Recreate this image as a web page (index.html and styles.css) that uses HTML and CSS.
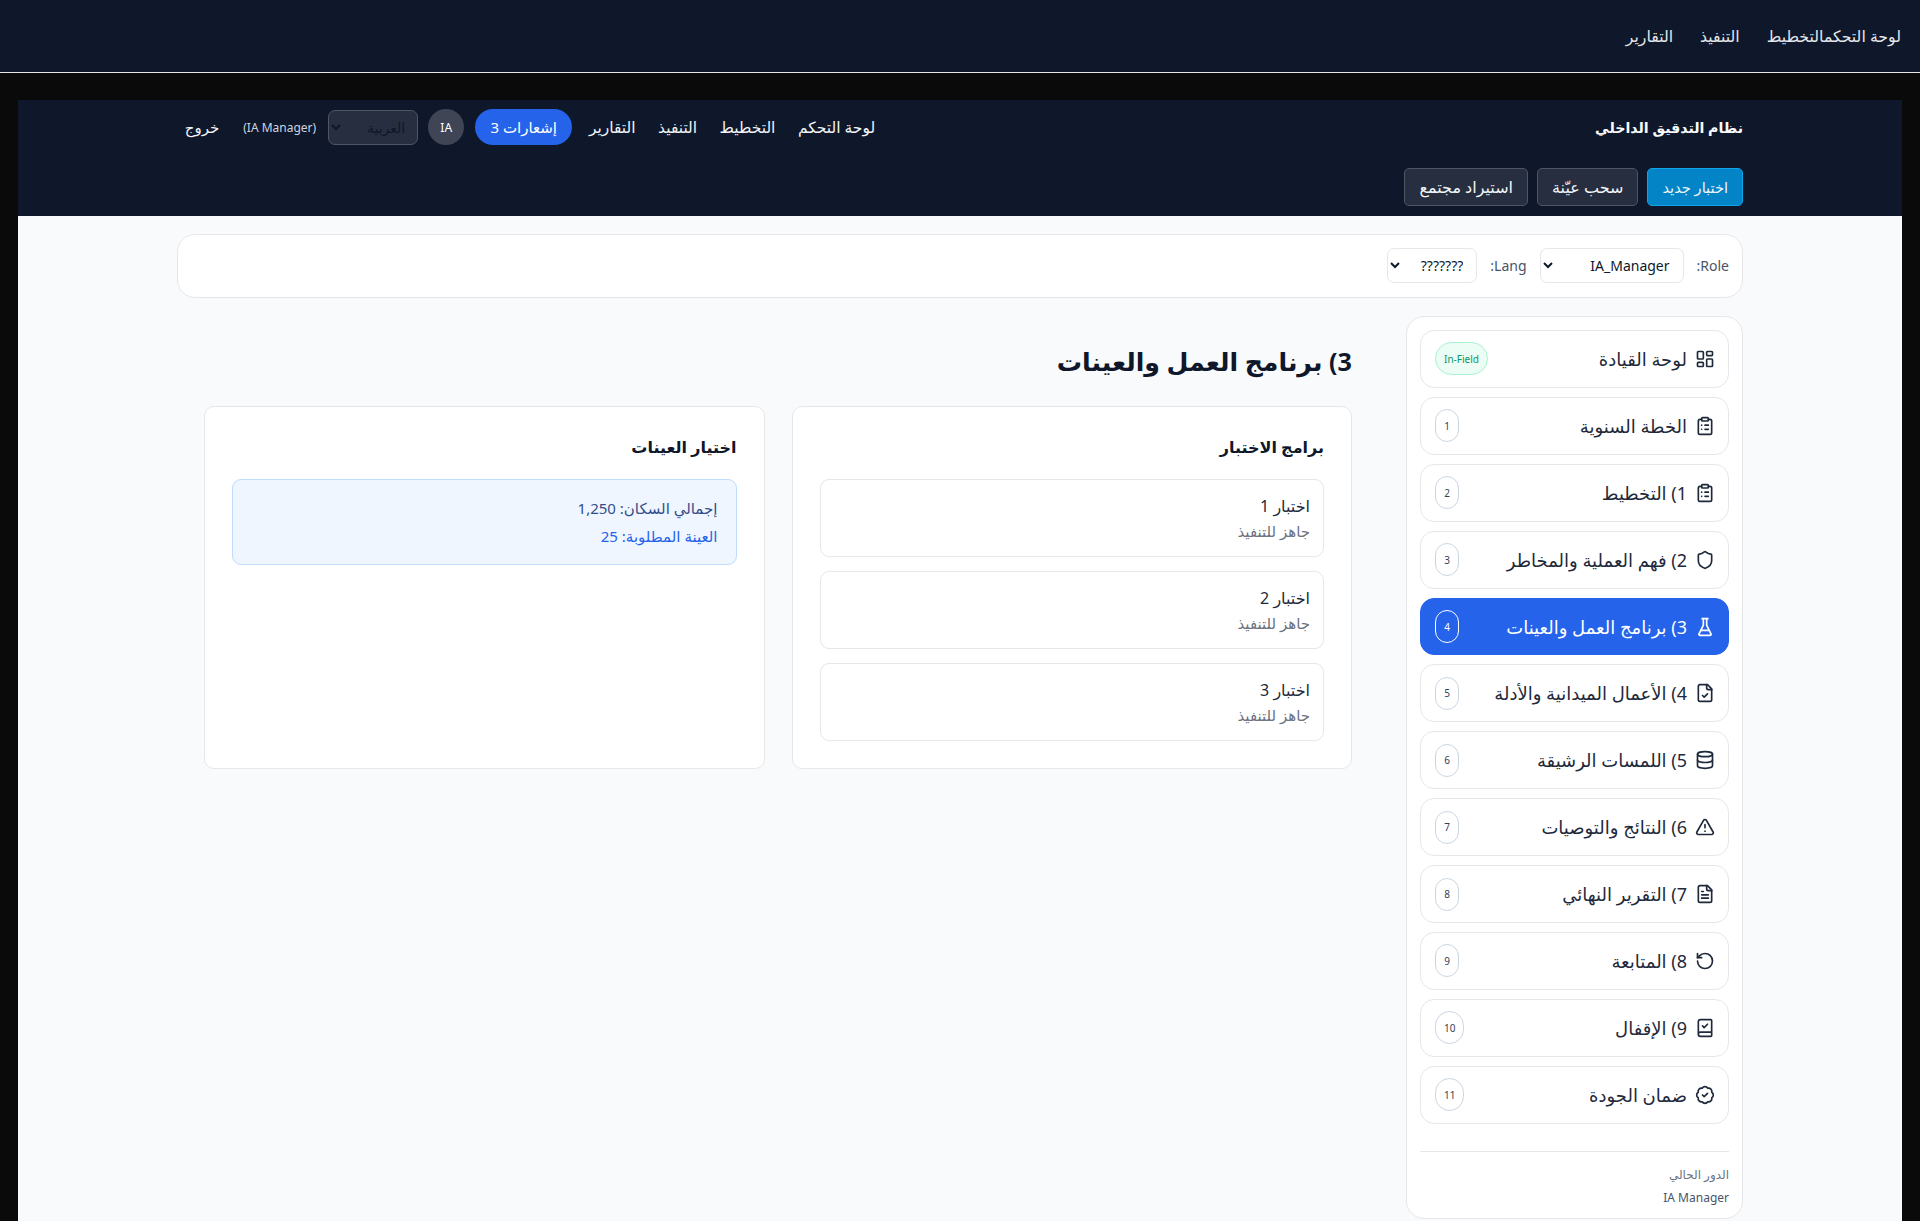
FILE: index.html
```html
<!DOCTYPE html>
<html lang="ar" dir="rtl">
<head>
    <meta charset="UTF-8">
    <meta name="viewport" content="width=device-width, initial-scale=1.0">
    <title>نظام التدقيق الداخلي</title>
    <link rel="stylesheet" href="styles.css">
</head>
<body>
    <nav class="topbar">
        <div class="topbar-group"><a href="#">لوحة التحكم</a><a href="#">التخطيط</a></div>
        <a href="#">التنفيذ</a>
        <a href="#">التقارير</a>
    </nav>

    <div class="shell">
        <header class="app-header">
            <div class="header-row">
                <div class="brand">نظام التدقيق الداخلي</div>
                <div class="header-nav">
                    <a class="nav-link" href="#">لوحة التحكم</a>
                    <a class="nav-link" href="#">التخطيط</a>
                    <a class="nav-link" href="#">التنفيذ</a>
                    <a class="nav-link" href="#">التقارير</a>
                    <button class="pill">إشعارات 3</button>
                    <span class="avatar">IA</span>
                    <select class="lang-select"><option>العربية</option></select>
                    <span class="user-role">(IA Manager)</span>
                    <a class="logout" href="#">خروج</a>
                </div>
            </div>
            <div class="header-actions">
                <button class="btn btn-primary">اختبار جديد</button>
                <button class="btn">سحب عيّنة</button>
                <button class="btn">استيراد مجتمع</button>
            </div>
        </header>

        <div class="content">
            <div class="filter-bar">
                <label>Role:</label>
                <select class="role-select"><option>IA_Manager</option></select>
                <label>Lang:</label>
                <select class="small-select"><option>???????</option></select>
            </div>

            <div class="layout">
                <aside class="sidebar">
                    <a class="side-item" href="#">
                        <svg class="icon" viewBox="0 0 24 24"><rect x="3" y="3" width="7" height="9" rx="1"/><rect x="14" y="3" width="7" height="5" rx="1"/><rect x="14" y="12" width="7" height="9" rx="1"/><rect x="3" y="16" width="7" height="5" rx="1"/></svg>
                        <span class="side-label">لوحة القيادة</span>
                        <span class="badge badge-green">In-Field</span>
                    </a>
                    <a class="side-item" href="#">
                        <svg class="icon" viewBox="0 0 24 24"><rect x="8" y="2" width="8" height="4" rx="1"/><path d="M16 4h2a2 2 0 0 1 2 2v14a2 2 0 0 1-2 2H6a2 2 0 0 1-2-2V6a2 2 0 0 1 2-2h2"/><path d="M12 11h4M12 16h4M8 11h.01M8 16h.01"/></svg>
                        <span class="side-label">الخطة السنوية</span>
                        <span class="badge">1</span>
                    </a>
                    <a class="side-item" href="#">
                        <svg class="icon" viewBox="0 0 24 24"><rect x="8" y="2" width="8" height="4" rx="1"/><path d="M16 4h2a2 2 0 0 1 2 2v14a2 2 0 0 1-2 2H6a2 2 0 0 1-2-2V6a2 2 0 0 1 2-2h2"/><path d="M12 11h4M12 16h4M8 11h.01M8 16h.01"/></svg>
                        <span class="side-label">1) التخطيط</span>
                        <span class="badge">2</span>
                    </a>
                    <a class="side-item" href="#">
                        <svg class="icon" viewBox="0 0 24 24"><path d="M20 13c0 5-3.5 7.5-7.66 8.95a1 1 0 0 1-.67-.01C7.5 20.5 4 18 4 13V6a1 1 0 0 1 1-1c2 0 4.5-1.2 6.24-2.72a1.17 1.17 0 0 1 1.52 0C14.51 3.81 17 5 19 5a1 1 0 0 1 1 1z"/></svg>
                        <span class="side-label">2) فهم العملية والمخاطر</span>
                        <span class="badge">3</span>
                    </a>
                    <a class="side-item active" href="#">
                        <svg class="icon" viewBox="0 0 24 24"><path d="M10 2v7.53a2 2 0 0 1-.21.9L4.72 20.55A1 1 0 0 0 5.61 22h12.78a1 1 0 0 0 .89-1.45l-5.07-10.12a2 2 0 0 1-.21-.9V2"/><path d="M8.5 2h7M7 16h10"/></svg>
                        <span class="side-label">3) برنامج العمل والعينات</span>
                        <span class="badge">4</span>
                    </a>
                    <a class="side-item" href="#">
                        <svg class="icon" viewBox="0 0 24 24"><path d="M15 2H6a2 2 0 0 0-2 2v16a2 2 0 0 0 2 2h12a2 2 0 0 0 2-2V7z"/><path d="M14 2v4a2 2 0 0 0 2 2h4"/><path d="m9 15 2 2 4-4"/></svg>
                        <span class="side-label">4) الأعمال الميدانية والأدلة</span>
                        <span class="badge">5</span>
                    </a>
                    <a class="side-item" href="#">
                        <svg class="icon" viewBox="0 0 24 24"><ellipse cx="12" cy="5" rx="9" ry="3"/><path d="M3 5v14c0 1.66 4 3 9 3s9-1.34 9-3V5"/><path d="M3 12c0 1.66 4 3 9 3s9-1.34 9-3"/></svg>
                        <span class="side-label">5) اللمسات الرشيقة</span>
                        <span class="badge">6</span>
                    </a>
                    <a class="side-item" href="#">
                        <svg class="icon" viewBox="0 0 24 24"><path d="m21.73 18-8-14a2 2 0 0 0-3.48 0l-8 14A2 2 0 0 0 4 21h16a2 2 0 0 0 1.73-3"/><path d="M12 9v4M12 17h.01"/></svg>
                        <span class="side-label">6) النتائج والتوصيات</span>
                        <span class="badge">7</span>
                    </a>
                    <a class="side-item" href="#">
                        <svg class="icon" viewBox="0 0 24 24"><path d="M15 2H6a2 2 0 0 0-2 2v16a2 2 0 0 0 2 2h12a2 2 0 0 0 2-2V7z"/><path d="M14 2v4a2 2 0 0 0 2 2h4"/><path d="M10 9H8M16 13H8M16 17H8"/></svg>
                        <span class="side-label">7) التقرير النهائي</span>
                        <span class="badge">8</span>
                    </a>
                    <a class="side-item" href="#">
                        <svg class="icon" viewBox="0 0 24 24"><path d="M3 12a9 9 0 1 0 9-9 9.75 9.75 0 0 0-6.74 2.74L3 8"/><path d="M3 3v5h5"/></svg>
                        <span class="side-label">8) المتابعة</span>
                        <span class="badge">9</span>
                    </a>
                    <a class="side-item" href="#">
                        <svg class="icon" viewBox="0 0 24 24"><path d="M4 19.5v-15A2.5 2.5 0 0 1 6.5 2H19a1 1 0 0 1 1 1v18a1 1 0 0 1-1 1H6.5a1 1 0 0 1 0-5H20"/><path d="m9 9.5 2 2 4-4"/></svg>
                        <span class="side-label">9) الإقفال</span>
                        <span class="badge">10</span>
                    </a>
                    <a class="side-item" href="#">
                        <svg class="icon" viewBox="0 0 24 24"><path d="M3.85 8.62a4 4 0 0 1 4.78-4.77 4 4 0 0 1 6.74 0 4 4 0 0 1 4.78 4.78 4 4 0 0 1 0 6.74 4 4 0 0 1-4.77 4.78 4 4 0 0 1-6.75 0 4 4 0 0 1-4.78-4.77 4 4 0 0 1 0-6.76Z"/><path d="m9 12 2 2 4-4"/></svg>
                        <span class="side-label">ضمان الجودة</span>
                        <span class="badge">11</span>
                    </a>
                    <div class="side-footer">
                        <div class="footer-label">الدور الحالي</div>
                        <div class="footer-role">IA Manager</div>
                    </div>
                </aside>

                <main class="main">
                    <h1>3) برنامج العمل والعينات</h1>
                    <div class="cards">
                        <section class="card">
                            <h2>برامج الاختبار</h2>
                            <div class="test-list">
                                <div class="test-item">
                                    <div class="test-name">اختبار 1</div>
                                    <div class="test-status">جاهز للتنفيذ</div>
                                </div>
                                <div class="test-item">
                                    <div class="test-name">اختبار 2</div>
                                    <div class="test-status">جاهز للتنفيذ</div>
                                </div>
                                <div class="test-item">
                                    <div class="test-name">اختبار 3</div>
                                    <div class="test-status">جاهز للتنفيذ</div>
                                </div>
                            </div>
                        </section>
                        <section class="card">
                            <h2>اختيار العينات</h2>
                            <div class="info-box">
                                <div class="info-total">إجمالي السكان: 1,250</div>
                                <div class="info-sample">العينة المطلوبة: 25</div>
                            </div>
                        </section>
                    </div>
                </main>
            </div>
        </div>
    </div>
</body>
</html>
```

FILE: styles.css
```css
* {
    box-sizing: border-box;
}
html, body {
    margin: 0;
    padding: 0;
}
body {
    background-color: #0a0a0a;
    font-family: "Noto Sans", "DejaVu Sans", sans-serif;
    color: #0f172a;
    font-size: 16px;
    height: 100vh;
    overflow: hidden;
    display: flex;
    flex-direction: column;
}
a {
    color: inherit;
    text-decoration: none;
}

/* top bar */
.topbar {
    height: 73px;
    flex-shrink: 0;
    background-color: #0f172a;
    border-bottom: 1px solid #e5e7eb;
    color: #e5e7eb;
    display: flex;
    align-items: center;
    gap: 27px;
    padding: 0 19px;
    font-size: 15.75px;
}
.shell {
    flex: 1;
    margin: 27px 18px 0;
    background-color: #f8fafc;
}

/* header */
.app-header {
    background-color: #0f172a;
    color: #f1f5f9;
    height: 116px;
    padding: 9px 159px 0;
}
.header-row {
    display: flex;
    align-items: center;
    justify-content: space-between;
    height: 36px;
}
.brand {
    font-weight: 700;
    font-size: 14.2px;
    color: #f8fafc;
}
.header-nav {
    display: flex;
    align-items: center;
    gap: 9px;
    font-size: 15px;
    margin-left: 1px;
}
.header-nav a {
    margin: 0 6.75px;
}
.header-nav .nav-link {
    font-size: 15.5px;
}
.header-nav .logout {
    margin-right: 15px;
}
.pill {
    height: 36px;
    width: 97px;
    margin: 0 1px 0 2px;
    border: none;
    border-radius: 18px;
    background-color: #2563eb;
    color: #fff;
    font: inherit;
}
.avatar {
    width: 36px;
    height: 36px;
    margin-left: 1px;
    border-radius: 50%;
    background-color: #3f4555;
    color: #fff;
    font-size: 12px;
    display: flex;
    align-items: center;
    justify-content: center;
}
.lang-select {
    width: 90px;
    height: 35px;
    background-color: #272e3f;
    border: 1px solid #4f5563;
    border-radius: 7px;
    color: #0f172a;
    font: inherit;
    font-size: 14px;
    padding: 0 8px;
}
.user-role {
    font-size: 12px;
    color: #cbd5e1;
    margin-right: 3px;
}
.header-actions {
    display: flex;
    gap: 9px;
    margin-top: 23px;
}
.btn {
    height: 38px;
    padding: 0 14px;
    border: 1px solid #4f5563;
    border-radius: 5px;
    background-color: #272e3f;
    color: #f1f5f9;
    font: inherit;
    font-size: 16px;
}
.btn-primary {
    background-color: #0284c7;
    border-color: #0ea5e9;
    font-size: 14.6px;
}

/* content */
.content {
    padding: 18px 159px 0;
}
.filter-bar {
    height: 64px;
    background-color: #fff;
    border: 1px solid #e5e7eb;
    border-radius: 18px;
    display: flex;
    align-items: center;
    gap: 13px;
    padding: 0 13px 2px;
    font-size: 14px;
    color: #475569;
}
.filter-bar select {
    height: 35px;
    background-color: #fff;
    border: 1px solid #e5e7eb;
    border-radius: 7px;
    color: #0f172a;
    font: inherit;
    padding: 0 9px;
}
.role-select {
    width: 144px;
}
.small-select {
    width: 90px;
}
.layout {
    display: flex;
    align-items: flex-start;
    gap: 27px;
    margin-top: 18px;
}

/* sidebar */
.sidebar {
    width: 337px;
    flex-shrink: 0;
    background-color: #fff;
    border: 1px solid #e5e7eb;
    border-radius: 18px;
    padding: 13px 13px 9px;
    display: flex;
    flex-direction: column;
    gap: 9px;
}
.side-item {
    height: 57.9px;
    display: flex;
    align-items: center;
    gap: 8px;
    padding: 0 13px 0 14px;
    border: 1px solid #e5e7eb;
    border-radius: 14px;
    font-size: 18px;
    color: #1e293b;
}
.side-item.active {
    background-color: #2563eb;
    border-color: #2563eb;
    color: #fff;
}
.icon {
    width: 20px;
    height: 20px;
    flex-shrink: 0;
    fill: none;
    stroke: currentColor;
    stroke-width: 2;
    stroke-linecap: round;
    stroke-linejoin: round;
}
.side-label {
    flex: 1;
}
.badge {
    min-width: 24px;
    height: 33px;
    padding: 0 8px;
    border: 1px solid #cbd5e1;
    border-radius: 17px;
    font-size: 10px;
    color: #334155;
    display: flex;
    align-items: center;
    justify-content: center;
}
.badge-green {
    background-color: #ecfdf5;
    border-color: #a7f3d0;
    color: #059669;
}
.active .badge {
    border-color: #fff;
    color: #fff;
}
.side-footer {
    margin-top: 18px;
    border-top: 1px solid #e5e7eb;
    padding-top: 11px;
    font-size: 12px;
    line-height: 23px;
}
.footer-label {
    color: #6b7280;
}
.footer-role {
    color: #475569;
}

/* main */
.main {
    flex: 1;
    padding: 27px;
}
h1 {
    font-size: 25.2px;
    font-weight: 700;
    margin: 0 0 27px;
    line-height: 36px;
}
.cards {
    display: grid;
    grid-template-columns: 1fr 1fr;
    gap: 27px;
}
.card {
    background-color: #fff;
    border: 1px solid #e5e7eb;
    border-radius: 10px;
    padding: 27px;
}
h2 {
    font-size: 16px;
    font-weight: 700;
    margin: 0 0 18px;
    line-height: 27px;
}
.test-list {
    display: flex;
    flex-direction: column;
    gap: 14px;
}
.test-item {
    height: 78px;
    border: 1px solid #e5e7eb;
    border-radius: 9px;
    padding: 13px;
}
.test-name {
    font-size: 16px;
    line-height: 27px;
    color: #1e293b;
}
.test-status {
    font-size: 15px;
    line-height: 23px;
    color: #6b7280;
}
.info-box {
    background-color: #eff6ff;
    border: 1px solid #bfdbfe;
    border-radius: 9px;
    padding: 14px 18px;
    font-size: 15px;
    line-height: 28px;
}
.info-total {
    color: #334e8a;
}
.info-sample {
    color: #2563eb;
}
```
